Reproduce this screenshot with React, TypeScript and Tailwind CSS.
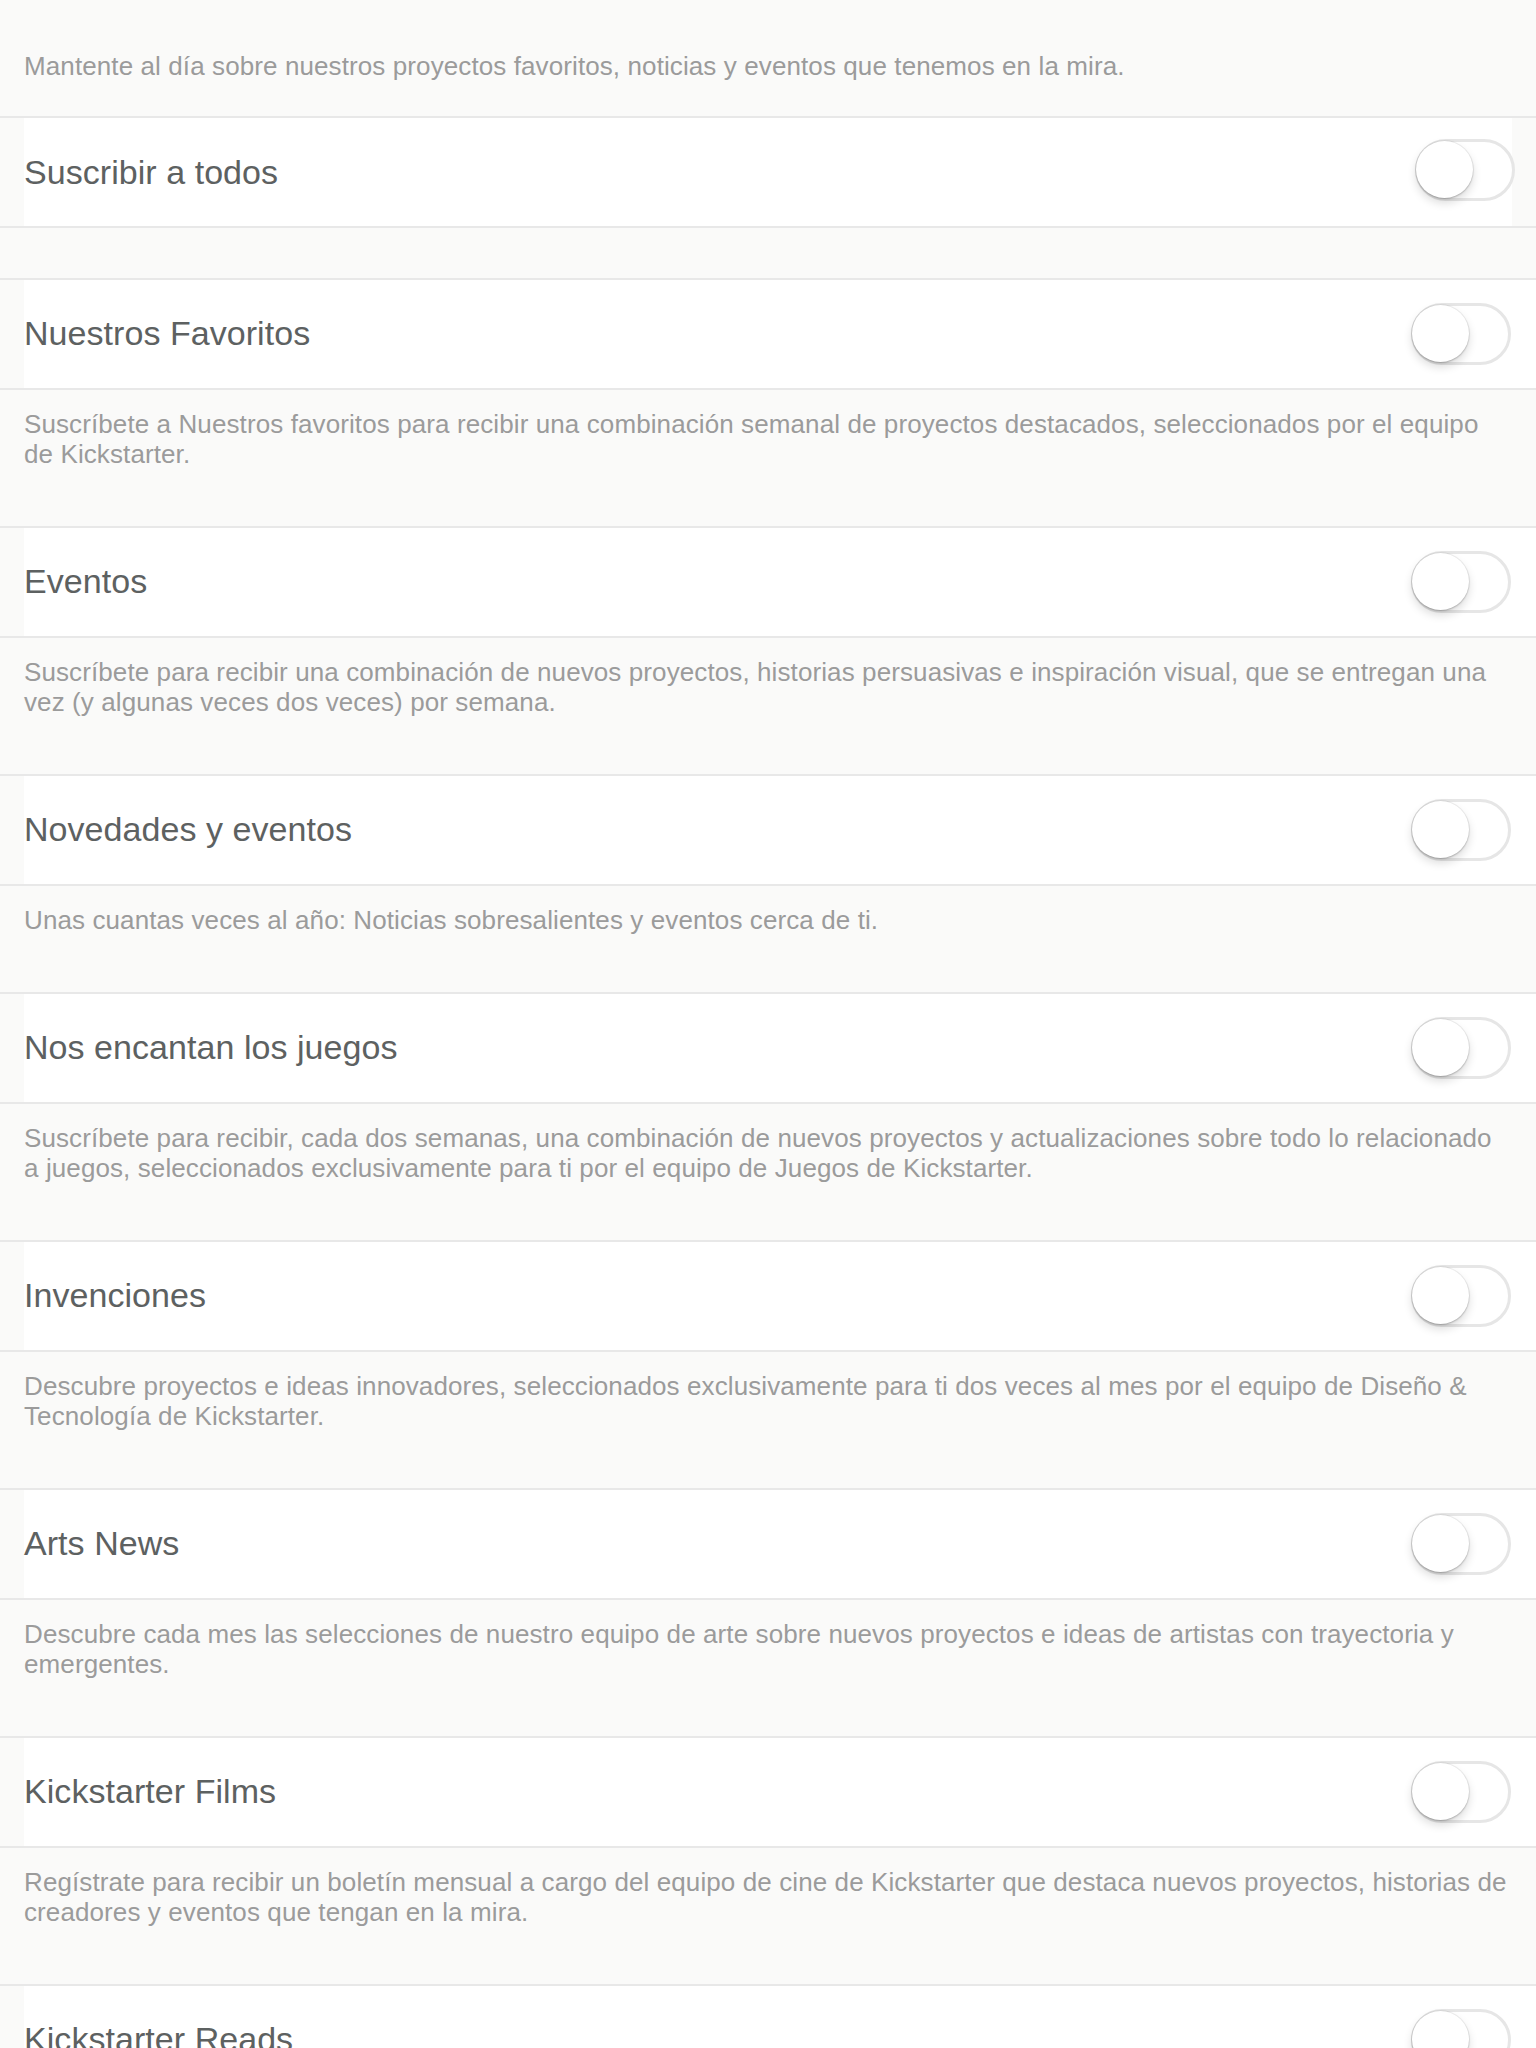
import { useState } from "react";

interface Newsletter {
  id: string;
  title: string;
  // description split at the same points as the app wraps it
  lines: string[];
}

const NEWSLETTERS: Newsletter[] = [
  {
    id: "favorites",
    title: "Nuestros Favoritos",
    lines: [
      "Suscríbete a Nuestros favoritos para recibir una combinación semanal de proyectos destacados, seleccionados por el equipo",
      "de Kickstarter.",
    ],
  },
  {
    id: "events",
    title: "Eventos",
    lines: [
      "Suscríbete para recibir una combinación de nuevos proyectos, historias persuasivas e inspiración visual, que se entregan una",
      "vez (y algunas veces dos veces) por semana.",
    ],
  },
  {
    id: "news",
    title: "Novedades y eventos",
    lines: ["Unas cuantas veces al año: Noticias sobresalientes y eventos cerca de ti."],
  },
  {
    id: "games",
    title: "Nos encantan los juegos",
    lines: [
      "Suscríbete para recibir, cada dos semanas, una combinación de nuevos proyectos y actualizaciones sobre todo lo relacionado",
      "a juegos, seleccionados exclusivamente para ti por el equipo de Juegos de Kickstarter.",
    ],
  },
  {
    id: "inventions",
    title: "Invenciones",
    lines: [
      "Descubre proyectos e ideas innovadores, seleccionados exclusivamente para ti dos veces al mes por el equipo de Diseño &",
      "Tecnología de Kickstarter.",
    ],
  },
  {
    id: "arts",
    title: "Arts News",
    lines: [
      "Descubre cada mes las selecciones de nuestro equipo de arte sobre nuevos proyectos e ideas de artistas con trayectoria y",
      "emergentes.",
    ],
  },
  {
    id: "films",
    title: "Kickstarter Films",
    lines: [
      "Regístrate para recibir un boletín mensual a cargo del equipo de cine de Kickstarter que destaca nuevos proyectos, historias de",
      "creadores y eventos que tengan en la mira.",
    ],
  },
  {
    id: "reads",
    title: "Kickstarter Reads",
    lines: [],
  },
];

function Toggle({ on, onChange }: { on: boolean; onChange: () => void }) {
  return (
    <button
      onClick={onChange}
      className={`relative w-[100px] h-[62px] shrink-0 rounded-full border-[3px] transition-colors ${
        on ? "bg-[#05ce78] border-[#05ce78]" : "bg-white border-[#e6e6e6]"
      }`}
    >
      <span
        className={`absolute top-[-1px] w-[57px] h-[57px] rounded-full bg-white shadow-[0_5px_10px_rgba(0,0,0,0.14),0_1px_2px_rgba(0,0,0,0.2),0_0_0_1px_rgba(0,0,0,0.05)] transition-all ${
          on ? "left-[37px]" : "left-[-2px]"
        }`}
      />
    </button>
  );
}

export default function App() {
  const [all, setAll] = useState(false);
  const [subs, setSubs] = useState<Record<string, boolean>>({});

  const toggle = (id: string) => setSubs((s) => ({ ...s, [id]: !s[id] }));

  return (
    <div
      className="min-h-screen bg-[#fafaf9] pb-20"
      style={{ fontFamily: '"Liberation Sans", Arial, sans-serif' }}
    >
      {/* Intro */}
      <p className="px-6 pt-[51px] pb-[35px] text-[26px] leading-[30px] tracking-[0.1px] text-[#9b9b9b]">
        Mantente al día sobre nuestros proyectos favoritos, noticias y eventos que tenemos en la mira.
      </p>

      {/* Subscribe all */}
      <div className="border-y-2 border-[#e8e8e8]">
        <div className="mx-6 h-[108px] bg-white flex items-center justify-between">
          <span className="text-[34px] tracking-[0.05px] text-[#5d6161]">Suscribir a todos</span>
          <div className="-mr-[3px]">
            <Toggle on={all} onChange={() => setAll(!all)} />
          </div>
        </div>
      </div>

      <div className="h-[50px]" />

      {/* Newsletters */}
      {NEWSLETTERS.map((n) => (
        <section key={n.id}>
          <div className="border-y-2 border-[#e8e8e8]">
            <div className="ml-6 h-[108px] bg-white flex items-center justify-between pr-[25px]">
              <span className="text-[34px] tracking-[0.05px] text-[#5d6161] -mt-[2px]">{n.title}</span>
              <Toggle on={!!subs[n.id] || all} onChange={() => toggle(n.id)} />
            </div>
          </div>
          {n.lines.length > 0 && (
            <p className="px-6 pt-[19px] pb-[57px] text-[26px] leading-[30px] tracking-[0.1px] text-[#9b9b9b]">
              {n.lines.map((line, i) => (
                <span key={i} className="block whitespace-nowrap">
                  {line}
                </span>
              ))}
            </p>
          )}
        </section>
      ))}
    </div>
  );
}
